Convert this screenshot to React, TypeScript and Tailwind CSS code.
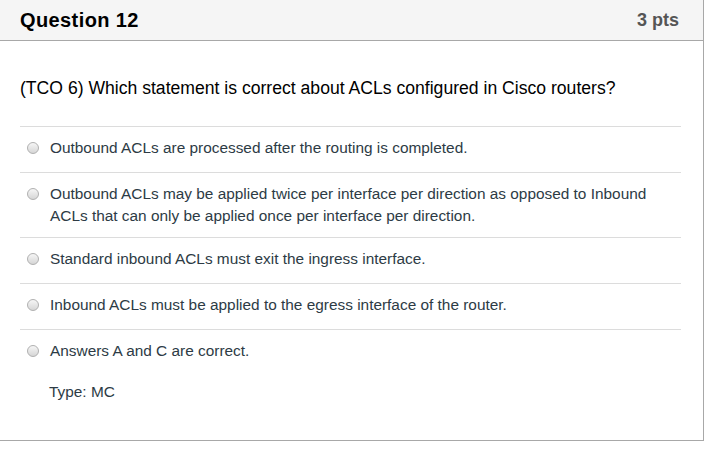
import React from 'react'

const answers = [
  'Outbound ACLs are processed after the routing is completed.',
  'Outbound ACLs may be applied twice per interface per direction as opposed to Inbound ACLs that can only be applied once per interface per direction.',
  'Standard inbound ACLs must exit the ingress interface.',
  'Inbound ACLs must be applied to the egress interface of the router.',
  'Answers A and C are correct.',
]

function Radio() {
  return (
    <span className="mt-[5px] mb-[8px] block h-[12px] w-[12px] shrink-0 rounded-full border border-[#b0b0b0] bg-gradient-to-b from-[#f6f6f6] to-[#d6d6d6]" />
  )
}

export default function App() {
  return (
    <div className="h-[452px] w-[716px] bg-white font-['Liberation_Sans',Arial,sans-serif]">
      <div className="w-[704px] border-r border-b border-[#a8a8a8]">
        <div className="flex h-[41px] items-center justify-between border-b border-[#a8a8a8] bg-[#f5f5f5] pl-5 pr-6">
          <h2 className="text-[20px] font-bold tracking-[0.4px] text-black">Question 12</h2>
          <span className="text-[18px] font-bold text-[#555]">3 pts</span>
        </div>

        <div className="px-5 pt-[36px] pb-[37px]">
          <p className="text-[17.6px] leading-[22px] text-black">
            (TCO 6) Which statement is correct about ACLs configured in Cisco routers?
          </p>

          <div className="mt-[27px] mr-[2px] border-t border-[#dcdcdc]">
            {answers.map((a, i) => (
              <div
                key={i}
                className={`flex items-start gap-[11px] pl-[7px] py-[10px] ${i < answers.length - 1 ? 'border-b border-[#dcdcdc]' : ''}`}
              >
                <Radio />
                <p className="pr-6 text-[15.4px] leading-[22px] text-[#2d3b45]">{a}</p>
              </div>
            ))}
          </div>

          <p className="mt-[6px] pl-[29px] text-[15.4px] leading-[22px] text-[#2d3b45]">Type: MC</p>
        </div>
      </div>
    </div>
  )
}
